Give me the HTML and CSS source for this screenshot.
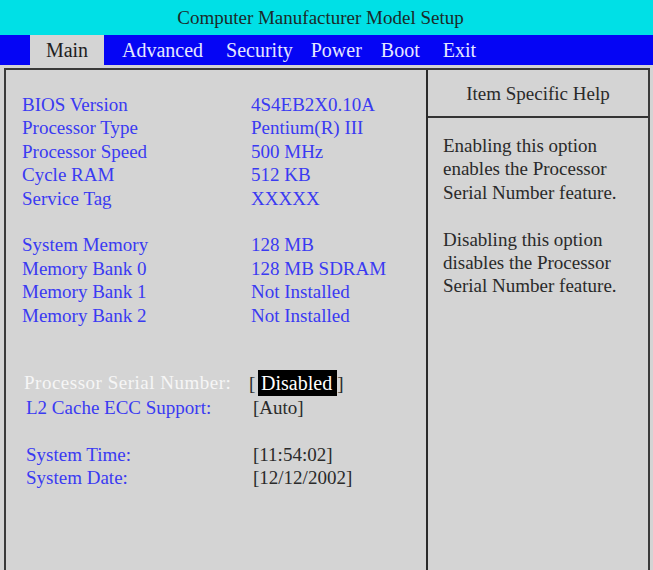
FILE: index.html
```html
<!DOCTYPE html>
<html>
<head>
<meta charset="utf-8">
<link rel="stylesheet" href="styles.css">
</head>
<body>
<div class="title">Computer Manufacturer Model Setup</div>
<div class="menubar">
  <div class="tab active">Main</div>
  <div class="tab t-adv">Advanced</div>
  <div class="tab t-sec">Security</div>
  <div class="tab t-pow">Power</div>
  <div class="tab t-boot">Boot</div>
  <div class="tab t-exit">Exit</div>
</div>
<div class="frame">
  <div class="left">
    <div class="info">
      <div class="row"><span class="lbl">BIOS Version</span><span class="val">4S4EB2X0.10A</span></div>
      <div class="row"><span class="lbl">Processor Type</span><span class="val">Pentium(R) III</span></div>
      <div class="row"><span class="lbl">Processor Speed</span><span class="val">500 MHz</span></div>
      <div class="row"><span class="lbl">Cycle RAM</span><span class="val">512 KB</span></div>
      <div class="row"><span class="lbl">Service Tag</span><span class="val">XXXXX</span></div>
      <div class="row blank"></div>
      <div class="row"><span class="lbl">System Memory</span><span class="val">128 MB</span></div>
      <div class="row"><span class="lbl">Memory Bank 0</span><span class="val">128 MB SDRAM</span></div>
      <div class="row"><span class="lbl">Memory Bank 1</span><span class="val">Not Installed</span></div>
      <div class="row"><span class="lbl">Memory Bank 2</span><span class="val">Not Installed</span></div>
    </div>
    <div class="settings">
      <div class="srow selected"><span class="slbl">Processor Serial Number:</span><span class="sval">[ <span class="hl">Disabled</span>]</span></div>
      <div class="srow"><span class="slbl">L2 Cache ECC Support:</span><span class="sval">[Auto]</span></div>
      <div class="srow blank"></div>
      <div class="srow"><span class="slbl">System Time:</span><span class="sval">[11:54:02]</span></div>
      <div class="srow"><span class="slbl">System Date:</span><span class="sval">[12/12/2002]</span></div>
    </div>
  </div>
  <div class="right">
    <div class="help-head">Item Specific Help</div>
    <div class="help-body">
      <p>Enabling this option<br>enables the Processor<br>Serial Number feature.</p>
      <p>Disabling this option<br>disables the Processor<br>Serial Number feature.</p>
    </div>
  </div>
</div>
</body>
</html>
```
FILE: styles.css
```css
html, body {
  margin: 0;
  padding: 0;
  background: #d4d4d4;
  font-family: "Liberation Serif", "Times New Roman", serif;
  font-size: 19px;
  overflow: hidden;
}
.title {
  height: 35px;
  line-height: 36px;
  background: #00e0e6;
  color: #1c2a2a;
  text-align: center;
  font-size: 19px;
  padding-right: 12px;
}
.menubar {
  height: 30px;
  background: #0505f5;
  display: flex;
  padding-left: 30px;
}
.tab {
  line-height: 30px;
  color: #e6e8ff;
  font-size: 20px;
}
.tab.active {
  width: 74px;
  background: #d4d4d4;
  color: #1e1e1e;
  text-align: center;
  line-height: 31px;
}
.t-adv { margin-left: 18px; }
.t-sec { margin-left: 23px; }
.t-pow { margin-left: 18px; }
.t-boot { margin-left: 19px; }
.t-exit { margin-left: 23px; }
.frame {
  margin: 3px 0 0 4px;
  width: 642px;
  height: 520px;
  border: 2px solid #3a3a3a;
  display: grid;
  grid-template-columns: 422px 1fr;
}
.left {
  border-right: 2px solid #2a2a2a;
  padding: 23px 0 0 16px;
}
.row {
  display: flex;
  height: 23.4px;
  line-height: 23.4px;
  color: #3a3af2;
}
.lbl { width: 229px; }
.settings {
  margin-top: 43px;
  padding-left: 4px;
}
.srow {
  display: flex;
  height: 23.4px;
  line-height: 23.4px;
  color: #3a3af2;
}
.srow.selected {
  height: 26px;
  line-height: 26px;
}
.slbl { width: 227px; }
.srow .sval { color: #2a2a2a; }
.srow.selected .slbl {
  color: #f6f6f6;
  width: 225px;
  margin-left: -2px;
  letter-spacing: 0.5px;
}
.hl {
  background: #000;
  color: #fff;
  padding: 0 5px 0 3px;
  margin-left: -2px;
  display: inline-block;
  height: 26px;
  font-size: 20px;
}
.help-head {
  height: 46px;
  line-height: 48px;
  text-align: center;
  color: #2a2a2a;
  border-bottom: 2px solid #333;
}
.help-body {
  padding: 16px 0 0 15px;
  color: #2a2a2a;
}
.help-body p {
  margin: 0 0 23.4px 0;
  line-height: 23.4px;
}
```
